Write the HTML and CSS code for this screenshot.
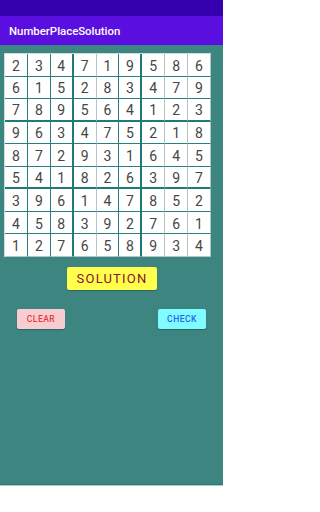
FILE: index.html
```html
<!DOCTYPE html>
<html>
<head>
<meta charset="utf-8">
<link rel="stylesheet" href="styles.css">
</head>
<body>
<div class="screen">
  <div class="status-bar"></div>
  <div class="app-bar"><span class="title">NumberPlaceSolution</span></div>
  <div class="content">
    <div class="board">
      <div class="cell">2</div><div class="cell">3</div><div class="cell">4</div><div class="cell">7</div><div class="cell">1</div><div class="cell">9</div><div class="cell">5</div><div class="cell">8</div><div class="cell">6</div>
      <div class="cell">6</div><div class="cell">1</div><div class="cell">5</div><div class="cell">2</div><div class="cell">8</div><div class="cell">3</div><div class="cell">4</div><div class="cell">7</div><div class="cell">9</div>
      <div class="cell">7</div><div class="cell">8</div><div class="cell">9</div><div class="cell">5</div><div class="cell">6</div><div class="cell">4</div><div class="cell">1</div><div class="cell">2</div><div class="cell">3</div>
      <div class="cell">9</div><div class="cell">6</div><div class="cell">3</div><div class="cell">4</div><div class="cell">7</div><div class="cell">5</div><div class="cell">2</div><div class="cell">1</div><div class="cell">8</div>
      <div class="cell">8</div><div class="cell">7</div><div class="cell">2</div><div class="cell">9</div><div class="cell">3</div><div class="cell">1</div><div class="cell">6</div><div class="cell">4</div><div class="cell">5</div>
      <div class="cell">5</div><div class="cell">4</div><div class="cell">1</div><div class="cell">8</div><div class="cell">2</div><div class="cell">6</div><div class="cell">3</div><div class="cell">9</div><div class="cell">7</div>
      <div class="cell">3</div><div class="cell">9</div><div class="cell">6</div><div class="cell">1</div><div class="cell">4</div><div class="cell">7</div><div class="cell">8</div><div class="cell">5</div><div class="cell">2</div>
      <div class="cell">4</div><div class="cell">5</div><div class="cell">8</div><div class="cell">3</div><div class="cell">9</div><div class="cell">2</div><div class="cell">7</div><div class="cell">6</div><div class="cell">1</div>
      <div class="cell">1</div><div class="cell">2</div><div class="cell">7</div><div class="cell">6</div><div class="cell">5</div><div class="cell">8</div><div class="cell">9</div><div class="cell">3</div><div class="cell">4</div>
    </div>
    <div class="solution-row">
      <button class="btn btn-solution">SOLUTION</button>
    </div>
    <div class="action-row">
      <button class="btn btn-clear">CLEAR</button>
      <button class="btn btn-check">CHECK</button>
    </div>
  </div>
  <div class="nav-area"></div>
</div>
</body>
</html>
```

FILE: styles.css
```css
html, body {
  margin: 0;
  padding: 0;
}

body {
  width: 223px;
  height: 512px;
  overflow: hidden;
  font-family: Roboto, "Noto Sans", "Liberation Sans", sans-serif;
  background: #ffffff;
}

.screen {
  display: flex;
  flex-direction: column;
  height: 512px;
}

.status-bar {
  height: 16px;
  background: #3500ad;
}

.app-bar {
  height: 29px;
  background: #5b0ee0;
  display: flex;
  align-items: center;
  padding-left: 9px;
}

.title {
  color: #ffffff;
  font-size: 11.4px;
  font-weight: 500;
  padding-top: 1px;
}

.content {
  height: 439px;
  background: #3c8581;
  border-bottom: 1px solid #26797a;
  display: flex;
  flex-direction: column;
  align-items: flex-start;
}

.board {
  margin: 8px 0 0 4px;
  width: 207px;
  height: 204px;
  box-sizing: border-box;
  border-left: 1px solid #cfdcda;
  border-top: 1px solid #cfdcda;
  display: grid;
  grid-template-columns: repeat(9, 1fr);
  grid-template-rows: repeat(9, 1fr);
}

.cell {
  box-sizing: border-box;
  background: #ffffff;
  border-right: 1px solid #2b807c;
  border-bottom: 1px solid #2b807c;
  display: flex;
  align-items: center;
  justify-content: center;
  padding-top: 2px;
  font-size: 14px;
  font-weight: 400;
  color: #454545;
}

/* grey-looking vertical lines */
.cell:nth-child(9n+4),
.cell:nth-child(9n+7),
.cell:nth-child(9n+8),
.cell:nth-child(9n) {
  border-right-color: #b3c6c4;
}

/* thick lines between 3x3 boxes */
.cell:nth-child(9n+3),
.cell:nth-child(9n+6) {
  border-right-width: 2px;
  border-right-color: #1f7b78;
}

.cell:nth-child(n+19):nth-child(-n+27),
.cell:nth-child(n+46):nth-child(-n+54) {
  border-bottom-width: 2px;
  border-bottom-color: #1f7b78;
}

.cell:nth-child(n+73) {
  border-bottom-color: #b3c6c4;
}

.solution-row {
  align-self: stretch;
  display: flex;
  justify-content: center;
  margin-top: 10px;
  padding-left: 1px;
}

.btn {
  font-family: Roboto, "Noto Sans", "Liberation Sans", sans-serif;
  border: none;
  border-radius: 2px;
  padding: 0;
  box-shadow: 0 1px 1px rgba(0, 0, 0, 0.25);
  display: flex;
  align-items: center;
  justify-content: center;
}

.btn-solution {
  width: 90px;
  height: 23px;
  background: #ffff4c;
  color: #8c0e34;
  font-size: 13px;
  font-weight: 400;
  letter-spacing: 1.2px;
}

.action-row {
  align-self: stretch;
  display: flex;
  justify-content: space-between;
  padding: 0 17px;
  margin-top: 19px;
}

.btn-clear,
.btn-check {
  width: 48px;
  height: 20px;
  font-size: 8.5px;
  font-weight: 500;
  letter-spacing: 0.5px;
}

.btn-clear {
  background: #f8cdd2;
  color: #e53a3a;
}

.btn-check {
  background: #7ffcff;
  color: #2a62f0;
}

.nav-area {
  flex: 1;
  background: #ffffff;
  border-top: 1px solid #b8c8c6;
}
```
